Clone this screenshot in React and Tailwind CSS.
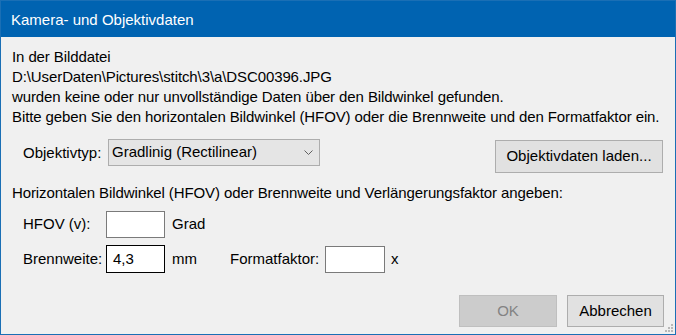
const font = { fontFamily: "'Liberation Sans', Arial, sans-serif" }

function App() {
  return (
    <div
      className="w-[676px] h-[335px] border border-[#1a6fb5] bg-[#f0f0f0] text-[15px] text-black flex flex-col relative whitespace-nowrap"
      style={font}
    >
      <div className="h-[36px] shrink-0 bg-[#0063b1] text-white flex items-center pl-[10px] pt-[2px]">
        Kamera- und Objektivdaten
      </div>

      <div className="flex flex-col px-[11px] pt-[10px] flex-1">
        <div className="leading-[20px] tracking-[-0.1px]">
          <p>In der Bilddatei</p>
          <p>D:\UserDaten\Pictures\stitch\3\a\DSC00396.JPG</p>
          <p>wurden keine oder nur unvollständige Daten über den Bildwinkel gefunden.</p>
          <p>Bitte geben Sie den horizontalen Bildwinkel (HFOV) oder die Brennweite und den Formatfaktor ein.</p>
        </div>

        <div className="flex items-start justify-between mt-[12px] pr-[1px]">
          <div className="flex items-center pl-[11px]">
            <span className="w-[85px] pt-[2px]">Objektivtyp:</span>
            <div className="w-[212px] h-[27px] bg-[#e5e5e5] border border-[#adadad] flex items-center justify-between pl-[3px] pr-[6px]">
              <span>Gradlinig (Rectilinear)</span>
              <svg width="9" height="6" viewBox="0 0 9 6">
                <polyline points="0.5,0.5 4.5,4.5 8.5,0.5" fill="none" stroke="#606060" strokeWidth="1" />
              </svg>
            </div>
          </div>
          <button className="w-[168px] h-[33px] mt-[1px] bg-[#e1e1e1] border border-[#adadad] flex items-center justify-center">
            Objektivdaten laden...
          </button>
        </div>

        <p className="leading-[20px] mt-[10px] tracking-[-0.1px]">
          Horizontalen Bildwinkel (HFOV) oder Brennweite und Verlängerungsfaktor angeben:
        </p>

        <div className="flex items-center pl-[11px] mt-[8px] h-[27px]">
          <span className="w-[83px]">HFOV (v):</span>
          <div className="w-[59px] h-[27px] bg-white border border-[#7a7a7a]" />
          <span className="ml-[7px]">Grad</span>
        </div>

        <div className="flex items-center pl-[11px] mt-[7px] h-[28px]">
          <span className="w-[83px]">Brennweite:</span>
          <div className="w-[59px] h-[28px] bg-white border border-black flex items-center pl-[6px]">
            4,3
          </div>
          <span className="ml-[7px] w-[58px]">mm</span>
          <span className="w-[95px]">Formatfaktor:</span>
          <div className="w-[60px] h-[27px] bg-white border border-[#7a7a7a]" />
          <span className="ml-[6px]">x</span>
        </div>

        <div className="flex justify-end gap-[10px] mt-[22px]">
          <button className="w-[98px] h-[32px] bg-[#cccccc] border border-[#bfbfbf] text-[#838383] flex items-center justify-center">
            OK
          </button>
          <button className="w-[97px] h-[32px] bg-[#e1e1e1] border border-[#adadad] flex items-center justify-center">
            Abbrechen
          </button>
        </div>
      </div>

      <svg className="absolute right-[1px] bottom-[1px]" width="10" height="10" viewBox="0 0 10 10">
        <rect x="7" y="1" width="2" height="2" fill="#b8b8b8" />
        <rect x="4" y="4" width="2" height="2" fill="#b8b8b8" />
        <rect x="7" y="4" width="2" height="2" fill="#b8b8b8" />
        <rect x="1" y="7" width="2" height="2" fill="#b8b8b8" />
        <rect x="4" y="7" width="2" height="2" fill="#b8b8b8" />
        <rect x="7" y="7" width="2" height="2" fill="#b8b8b8" />
      </svg>
    </div>
  )
}

export default App
